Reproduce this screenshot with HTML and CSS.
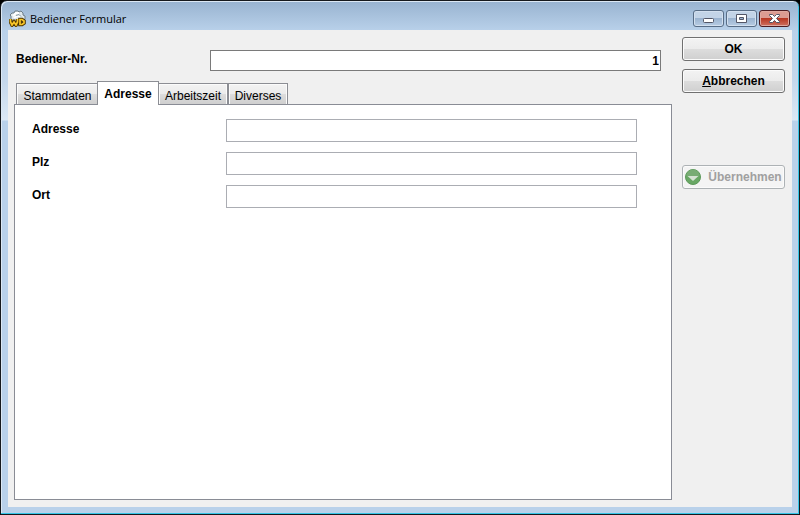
FILE: index.html
```
<!DOCTYPE html>
<html lang="de">
<head>
    <meta charset="UTF-8">
    <meta name="viewport" content="width=device-width, initial-scale=1.0">
    <title>Bediener Formular</title>
    <link rel="stylesheet" href="styles.css">
</head>
<body>

    <div class="window">
        <!-- Title bar -->
        <header class="title-bar">
            <svg class="app-icon" width="17" height="17" viewBox="0 0 17 17" aria-hidden="true">
                <path d="M2 9V6L1 5l2-2 2 0 1-2h3l1 1 2-1 2 2v2l2 1v3l-2 2H4z" fill="#dfe8ec" stroke="#6d7d86"/>
                <path d="M4 6l3-3h3M5 8l3-2 3 1" fill="none" stroke="#fff" stroke-width="2"/>
                <path d="M7 5.500l3-1 2 2" fill="none" stroke="#8b9aa3"/>
                <path d="M1.500 9v3l1.500 3 2-3 2 3 1.500-3V9M11 9.500h2l2 1.500v2l-2 1.500h-2z" fill="none" stroke="#4c3500" stroke-width="3.600"/>
                <path d="M1.500 9v3l1.500 3 2-3 2 3 1.500-3V9M11 9.500h2l2 1.500v2l-2 1.500h-2z" fill="none" stroke="#f8c62a" stroke-width="1.700"/>
            </svg>
            <h1>Bediener Formular</h1>
            <div class="window-buttons">
                <button type="button" class="window-button" aria-label="Minimieren">
                    <svg width="13" height="11" viewBox="0 0 13 11"><rect x="1.500" y="5.500" width="10" height="4" rx="1" fill="#fff" stroke="#535666"/></svg>
                </button>
                <button type="button" class="window-button" aria-label="Maximieren">
                    <svg width="13" height="11" viewBox="0 0 13 11"><path d="M1.500 1.500h10v8h-10zM4.500 4.500v2h4v-2z" fill="#fff" fill-rule="evenodd" stroke="#535666"/></svg>
                </button>
                <button type="button" class="window-button close" aria-label="Schließen">
                    <svg width="13" height="11" viewBox="0 0 13 11"><path d="M1.500 1.500h3l2 2 2-2h3v1L8.500 5.500l3 3v1h-3l-2-2-2 2h-3v-1l3-3-3-3z" fill="#fff" stroke="#535666"/></svg>
                </button>
            </div>
        </header>

        <form class="content">
            <div class="main-column">
                <div class="number-row">
                    <label for="bedienerNr">Bediener-Nr.</label>
                    <input type="text" id="bedienerNr" value="1">
                </div>

                <div class="tabs" role="tablist">
                    <button type="button" class="tab tab-first" role="tab" aria-selected="false">Stammdaten</button>
                    <button type="button" class="tab active" role="tab" id="tabAdresse" aria-selected="true">Adresse</button>
                    <button type="button" class="tab tab-after" role="tab" aria-selected="false">Arbeitszeit</button>
                    <button type="button" class="tab" role="tab" aria-selected="false">Diverses</button>
                </div>

                <div class="panel" role="tabpanel" aria-labelledby="tabAdresse">
                    <div class="field">
                        <label for="adresse">Adresse</label>
                        <input type="text" id="adresse">
                    </div>
                    <div class="field">
                        <label for="plz">Plz</label>
                        <input type="text" id="plz">
                    </div>
                    <div class="field">
                        <label for="ort">Ort</label>
                        <input type="text" id="ort">
                    </div>
                </div>
            </div>

            <!-- Right column: form actions -->
            <div class="actions">
                <button type="submit" class="action">OK</button>
                <button type="button" class="action" accesskey="a"><span><u>A</u>bbrechen</span></button>
                <button type="button" class="action apply" disabled>
                    <svg width="16" height="16" viewBox="0 0 16 16" aria-hidden="true">
                        <circle cx="8" cy="8" r="7.500" fill="#69a865" stroke="#5d9a5b"/>
                        <path d="M1.500 7a6.500 6.500 0 0 1 13 0z" fill="#78ac74"/>
                        <path d="M2.500 7h11L8 12z" fill="#d5e2d3"/>
                    </svg>
                    Übernehmen
                </button>
            </div>
        </form>
    </div>

</body>
</html>
```
FILE: styles.css
```
* {
    box-sizing: border-box;
}

body {
    margin: 0;
    background: #000;
    color: #000;
    font-family: "Liberation Sans", Arial, sans-serif;
    font-size: 12px;
}

/* Window frame */
.window {
    display: flex;
    flex-direction: column;
    min-height: 100vh;
    padding: 0 7px 7px;
    border: 1px solid #16191d;
    border-radius: 7px 7px 0 0;
    background: linear-gradient(#98b3d0, #b9d1ea 30px, #c5d8ec 80px, #dbe8f5 119px, #b9d1ea 120px);
    box-shadow: inset -1px -1px #35c5e6, inset 1px 1px #dce8f4;
}

.title-bar {
    display: flex;
    align-items: center;
    height: 29px;
    padding: 6px 2px 0 1px;
}

.title-bar h1 {
    flex: 1;
    margin: 0 0 0 4px;
    font-family: "Open Sans", "Noto Sans", sans-serif;
    font-size: 11px;
    font-weight: normal;
}

.window-buttons {
    display: flex;
    gap: 2px;
}

.window-button {
    display: flex;
    align-items: center;
    justify-content: center;
    width: 31px;
    height: 17px;
    padding: 0;
    border: 1px solid #586d86;
    border-radius: 3px;
    background: linear-gradient(#c3d4e7 50%, #9bb4d0 50%, #b7cce3);
    box-shadow: inset 0 0 0 1px #d3e0ef;
}

.window-button.close {
    border-color: #4d1c21;
    background: linear-gradient(#dc9b91 50%, #b83722 50%, #ce7161);
    box-shadow: inset 0 0 0 1px #dfa89f;
}

/* Form */
.content {
    display: flex;
    flex: 1;
    gap: 10px;
    padding: 7px 7px 7px 6px;
    background: #f0f0f0;
}

.main-column {
    display: flex;
    flex: 1;
    flex-direction: column;
    min-width: 0;
}

label {
    padding-bottom: 3px;
    font-weight: bold;
}

input {
    height: 23px;
    min-width: 0;
    padding: 0 1px;
    border: 1px solid #abadb3;
    background: #fff;
    font: bold 12px "Liberation Sans", Arial, sans-serif;
}

.number-row {
    display: flex;
    align-items: center;
    padding: 13px 11px 0 2px;
}

.number-row label {
    width: 194px;
}

.number-row input {
    flex: 1;
    height: 21px;
    border-color: #7a7a7a;
    text-align: right;
}

/* Tabs */
.tabs {
    display: flex;
    align-items: flex-end;
    height: 33px;
    padding-left: 2px;
}

.tab {
    width: 60px;
    height: 21px;
    padding: 3px 0 0;
    border: 1px solid #8c8e94;
    border-bottom: 0;
    background: linear-gradient(#f3f3f3, #ebebeb 50%, #dddddd 50%, #cfcfcf);
    box-shadow: inset 1px 1px #fbfbfb, inset -1px 0 #fbfbfb;
    color: #000;
    font: 12px "Liberation Sans", Arial, sans-serif;
}

.tab-first {
    width: 82px;
    border-right: 0;
}

.tab-after {
    width: 69px;
    border-left: 0;
}

.tab.active {
    z-index: 1;
    width: 62px;
    height: 24px;
    margin: 0 0 -1px -1px;
    padding: 1px 0 0;
    background: #fff;
    box-shadow: none;
    font-weight: bold;
}

.panel {
    flex: 1;
    padding: 14px 34px 14px 17px;
    border: 1px solid #898c95;
    background: #fff;
}

.field {
    display: flex;
    align-items: center;
    margin-bottom: 10px;
}

.field label {
    width: 194px;
}

.field input {
    flex: 1;
}

/* Right Column */
.actions {
    display: flex;
    flex-direction: column;
    gap: 8px;
    width: 103px;
}

.action {
    display: flex;
    align-items: center;
    justify-content: center;
    height: 24px;
    padding: 0;
    border: 1px solid #707070;
    border-radius: 3px;
    background: linear-gradient(#f3f3f3, #ebebeb 50%, #dddddd 50%, #cfcfcf);
    box-shadow: inset 0 0 0 1px #fbfbfb;
    color: #000;
    font: bold 12px "Liberation Sans", Arial, sans-serif;
}

.action.apply {
    gap: 7px;
    margin-top: 64px;
    border-color: #adb2b5;
    background: #f4f4f4;
    color: #a0a0a0;
}
```
